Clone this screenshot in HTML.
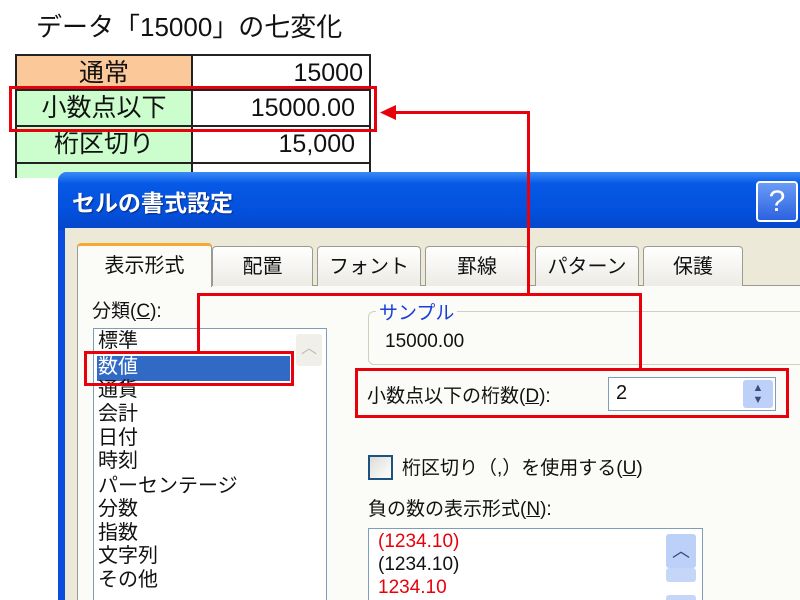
<!DOCTYPE html>
<html style="width:800px;height:600px;overflow:hidden"><head><meta charset="utf-8"><style>
*{margin:0;padding:0;box-sizing:border-box}
body{width:800px;height:600px;overflow:hidden;background:#fff;position:relative;font-family:"Liberation Sans","Noto Sans CJK JP",sans-serif;color:#111}
.a{position:absolute;white-space:nowrap}
.cell{position:absolute;border:2px solid #222;font-size:25px;line-height:34px}
.r{position:absolute;border:3px solid #e8000b}
.rl{position:absolute;background:#e8000b}
.tab{position:absolute;top:246px;height:40px;border:1px solid #9c9b91;border-bottom:none;border-radius:4px 4px 0 0;background:linear-gradient(#fff,#ecebe5);font-size:20px;text-align:center;line-height:40px}
.li{position:absolute;left:98px;font-size:20px;line-height:23px}
</style></head><body>
<div class="a" style="left:36px;top:7px;font-size:26px;">データ「15000」の七変化</div>

<div class="cell" style="left:15px;top:54px;width:178px;height:37px;background:#fbc899;text-align:center">通常</div>
<div class="cell" style="left:191px;top:54px;width:180px;height:37px;text-align:right;padding-right:6px">15000</div>
<div class="cell" style="left:15px;top:89px;width:178px;height:38px;background:#ccfdcc;text-align:center">小数点以下</div>
<div class="cell" style="left:191px;top:89px;width:180px;height:38px;text-align:right;padding-right:14px">15000.00</div>
<div class="cell" style="left:15px;top:125px;width:178px;height:39px;background:#ccfdcc;text-align:center">桁区切り</div>
<div class="cell" style="left:191px;top:125px;width:180px;height:39px;text-align:right;padding-right:14px">15,000</div>
<div class="cell" style="left:15px;top:162px;width:178px;height:16px;background:#ccfdcc;border-bottom:none"></div>
<div class="cell" style="left:191px;top:162px;width:180px;height:16px;border-bottom:none"></div>

<div class="r" style="left:9px;top:86px;width:368px;height:46px"></div>

<!-- dialog -->
<div class="a" style="left:58px;top:172px;width:742px;height:428px;background:#0a4ee0;border-radius:9px 0 0 0"></div>
<div class="a" style="left:58px;top:172px;width:742px;height:58px;border-radius:9px 0 0 0;background:linear-gradient(#3c8bf8 0%,#0659e6 20%,#0350dc 70%,#0546c8 100%)"></div>
<div class="a" style="left:72px;top:184px;color:#fff;font-weight:bold;font-size:23px;text-shadow:1px 1px 1px #0a2a80">セルの書式設定</div>
<div class="a" style="left:756px;top:181px;width:42px;height:41px;border:2px solid #fff;border-radius:4px;background:linear-gradient(#6a9cf6,#2c62e0);color:#fff;font-size:30px;text-align:center;line-height:37px">?</div>
<div class="a" style="left:65px;top:228px;width:735px;height:372px;background:#ece9d8"></div>
<div class="a" style="left:77px;top:285px;width:723px;height:315px;background:#fbfbf8;border:1px solid #9c9b91;border-right:none;border-bottom:none"></div>

<div class="tab" style="left:212px;width:101px">配置</div>
<div class="tab" style="left:317px;width:104px">フォント</div>
<div class="tab" style="left:425px;width:104px">罫線</div>
<div class="tab" style="left:535px;width:104px">パターン</div>
<div class="tab" style="left:643px;width:100px">保護</div>
<div class="tab" style="left:77px;top:243px;width:135px;height:44px;background:#fbfbf8;border-top:3px solid #f6a833">表示形式</div>

<div class="a" style="left:92px;top:296px;font-size:19px">分類(<u>C</u>):</div>
<div class="a" style="left:93px;top:328px;width:234px;height:280px;border:1px solid #7f9db9;background:#fff"></div>
<div class="a" style="left:296px;top:334px;width:26px;height:32px;background:#f0efe9;border-radius:3px;color:#bbb;text-align:center;font-size:16px">︿</div>
<div class="a" style="left:97px;top:356px;width:193px;height:25px;background:#316ac5"></div>
<div class="li" style="top:330px">標準</div>
<div class="li" style="top:356px;color:#fff">数値</div>
<div class="li" style="top:379px">通貨</div>
<div class="li" style="top:403px">会計</div>
<div class="li" style="top:427px">日付</div>
<div class="li" style="top:450px">時刻</div>
<div class="li" style="top:475px">パーセンテージ</div>
<div class="li" style="top:498px">分数</div>
<div class="li" style="top:522px">指数</div>
<div class="li" style="top:545px">文字列</div>
<div class="li" style="top:569px">その他</div>
<div class="r" style="left:84px;top:351px;width:210px;height:35px"></div>

<div class="a" style="left:368px;top:311px;width:450px;height:54px;border:1px solid #d0d0bf;border-radius:6px"></div>
<div class="a" style="left:376px;top:298px;background:#fbfbf8;color:#1a3fd8;font-size:19px;padding:0 3px">サンプル</div>
<div class="a" style="left:385px;top:331px;font-size:19px">15000.00</div>

<div class="a" style="left:367px;top:381px;font-size:19px">小数点以下の桁数(<u>D</u>):</div>
<div class="a" style="left:608px;top:377px;width:168px;height:34px;border:1px solid #7f9db9;background:#fff;font-size:20px;padding:4px 0 0 7px">2</div>
<div class="a" style="left:743px;top:380px;width:30px;height:28px;background:#bcd0f8;border-radius:3px;color:#3a4a7a;font-size:11px;text-align:center;line-height:12px;padding-top:2px">▲<br>▼</div>
<div class="r" style="left:355px;top:368px;width:434px;height:50px"></div>

<div class="a" style="left:368px;top:455px;width:25px;height:25px;border:2px solid #1c5180;background:linear-gradient(135deg,#dcdcd6,#fff)"></div>
<div class="a" style="left:402px;top:453px;font-size:19px">桁区切り（,）を使用する(<u>U</u>)</div>
<div class="a" style="left:368px;top:494px;font-size:19px">負の数の表示形式(<u>N</u>):</div>
<div class="a" style="left:368px;top:528px;width:335px;height:80px;border:1px solid #7f9db9;background:#fff"></div>
<div class="a" style="left:666px;top:534px;width:30px;height:34px;background:#bcd0f8;border-radius:3px;color:#3a4a7a;text-align:center;font-size:18px;line-height:34px">︿</div>
<div class="a" style="left:666px;top:568px;width:30px;height:14px;background:#c6d6f8;border-radius:3px"></div>
<div class="a" style="left:666px;top:595px;width:30px;height:10px;background:#c6d6f8;border-radius:3px"></div>
<div class="a" style="left:378px;top:531px;font-size:19px;color:#e8000b">(1234.10)</div>
<div class="a" style="left:378px;top:554px;font-size:19px">(1234.10)</div>
<div class="a" style="left:378px;top:577px;font-size:19px;color:#e8000b">1234.10</div>

<!-- connectors -->
<div class="rl" style="left:198px;top:293px;width:444px;height:3px"></div>
<div class="rl" style="left:197px;top:293px;width:3px;height:59px"></div>
<div class="rl" style="left:639px;top:293px;width:3px;height:77px"></div>
<div class="rl" style="left:527px;top:111px;width:3px;height:184px"></div>
<div class="rl" style="left:392px;top:111px;width:138px;height:3px"></div>
<svg class="a" style="left:380px;top:104px" width="16" height="17"><polygon points="0,8.5 16,1 16,16" fill="#e8000b"/></svg>
</body></html>
